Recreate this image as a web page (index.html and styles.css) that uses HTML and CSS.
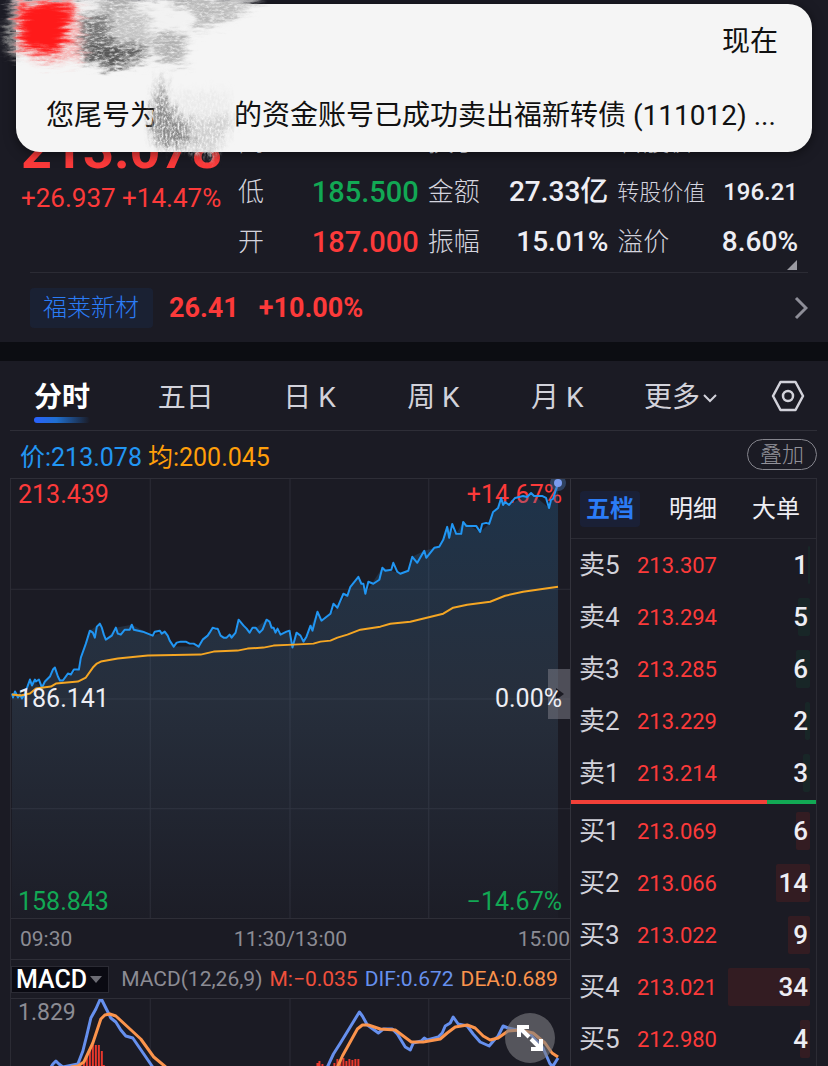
FILE: index.html
```html
<!DOCTYPE html>
<html lang="zh-CN">

<head>
    <meta charset="UTF-8">
    <meta name="viewport" content="width=device-width, initial-scale=1.0">
    <title>分时行情</title>
    <link rel="stylesheet" href="styles.css">
</head>

<body>
    <!-- Notification -->
    <div class="notice" role="status">
        <div class="notice-time">现在</div>
        <div class="notice-text">
            <span>您尾号为</span>
            <span class="notice-mask"></span>
            <span>的资金账号已成功卖出福新转债 (111012) ...</span>
        </div>
    </div>
    <svg class="smudge" viewBox="0 0 280 170" aria-hidden="true">
        <defs>
            <filter id="chalk" x="-20%" y="-20%" width="140%" height="140%" color-interpolation-filters="sRGB">
                <feGaussianBlur in="SourceGraphic" stdDeviation="4" result="soft" />
                <feTurbulence type="fractalNoise" baseFrequency="0.05 0.25" numOctaves="4" seed="4" result="streak" />
                <feDisplacementMap in="soft" in2="streak" scale="22" xChannelSelector="R" yChannelSelector="G" result="rough" />
                <feTurbulence type="fractalNoise" baseFrequency="0.2 0.5" numOctaves="3" seed="9" />
                <feColorMatrix values="0 0 0 0 0  0 0 0 0 0  0 0 0 0 0  2 0 0 0 -0.15" result="grain" />
                <feComposite in="rough" in2="grain" operator="in" />
            </filter>
            <filter id="chalk-solid" x="-20%" y="-20%" width="140%" height="140%" color-interpolation-filters="sRGB">
                <feGaussianBlur in="SourceGraphic" stdDeviation="4" result="soft" />
                <feTurbulence type="fractalNoise" baseFrequency="0.05 0.3" numOctaves="4" seed="6" result="streak" />
                <feDisplacementMap in="soft" in2="streak" scale="20" xChannelSelector="R" yChannelSelector="G" />
            </filter>
            <filter id="chalk-down" x="-20%" y="-20%" width="140%" height="140%" color-interpolation-filters="sRGB">
                <feGaussianBlur in="SourceGraphic" stdDeviation="4" result="soft" />
                <feTurbulence type="fractalNoise" baseFrequency="0.2 0.08" numOctaves="4" seed="7" result="streak" />
                <feDisplacementMap in="soft" in2="streak" scale="16" xChannelSelector="R" yChannelSelector="G" result="rough" />
                <feTurbulence type="fractalNoise" baseFrequency="0.5 0.3" numOctaves="3" seed="3" />
                <feColorMatrix values="0 0 0 0 0  0 0 0 0 0  0 0 0 0 0  2.5 0 0 0 -0.5" result="grain" />
                <feComposite in="rough" in2="grain" operator="in" />
            </filter>
        </defs>
        <g filter="url(#chalk-solid)">
            <path d="M12 -6H262L232 12 190 24 182 54 140 60 110 64 60 58 14 54Z" fill="#f2f2f2" />
        </g>
        <g filter="url(#chalk)">
            <path d="M80 12H150L144 50 120 56 80 54Z" fill="#c4c4c4" />
            <path d="M80 16H110V58H80Z" fill="#777777" />
            <path d="M88 46H144V58L112 68 84 58Z" fill="#555555" />
            <path d="M144 34H186V62H162Z" fill="#b0b0b0" />
            <path d="M98 0H132V10H100ZM170 -4H200V4H170Z" fill="#999999" />
            <path d="M190 0H262L236 14 196 30Z" fill="#b8b8b8" />
            <path d="M4 30L16 2 17 58 8 50Z" fill="#999999" />
            <path d="M26 48H80V62H40ZM66 10H82V60H66Z" fill="#f6b5b5" />
        </g>
        <g filter="url(#chalk-solid)">
            <path d="M18 2H72L66 42 56 54 20 50Z" fill="#ff1a1a" />
        </g>
        <path d="M164 80H212L228 100 230 122 212 150 160 140 152 116Z" fill="#f5f5f5" />
        <g filter="url(#chalk-down)">
            <path d="M162 74L154 100 150 124 158 146 196 148 190 122 168 108Z" fill="#8a8a8a" />
            <path d="M186 116H236L222 140 210 160 190 144Z" fill="#d0d0d0" />
            <path d="M172 92H228V116L178 120Z" fill="#ebebeb" />
        </g>
    </svg>

    <!-- Quote summary -->
    <section class="quote">
        <div class="quote-main">
            <div class="quote-price">
                <div class="price">213.078</div>
                <div class="change">+26.937 +14.47%</div>
            </div>
            <dl class="stats">
                <div><dt>高</dt><dd class="up">213.439</dd></div>
                <div><dt>低</dt><dd class="down">185.500</dd></div>
                <div><dt>开</dt><dd class="up">187.000</dd></div>
            </dl>
            <dl class="stats">
                <div><dt>换手</dt><dd>138.6%</dd></div>
                <div><dt>金额</dt><dd>27.33亿</dd></div>
                <div><dt>振幅</dt><dd>15.01%</dd></div>
            </dl>
            <dl class="stats">
                <div><dt>转股价</dt><dd>13.6</dd></div>
                <div class="small"><dt>转股价值</dt><dd>196.21</dd></div>
                <div><dt>溢价</dt><dd>8.60%</dd></div>
            </dl>
            <span class="corner"></span>
        </div>
        <a class="underlying" href="#">
            <span class="underlying-name">福莱新材</span>
            <span class="underlying-price">26.41</span>
            <span class="underlying-price">+10.00%</span>
            <svg class="arrow" viewBox="0 0 14 24" aria-hidden="true">
                <path d="M2 2L12 12 2 22" fill="none" stroke="#8e8e98" stroke-width="3" />
            </svg>
        </a>
    </section>

    <section class="panel">
        <nav class="tabs">
            <button class="tab active">分时</button>
            <button class="tab">五日</button>
            <button class="tab">日 K</button>
            <button class="tab">周 K</button>
            <button class="tab">月 K</button>
            <button class="tab">更多<svg class="more" viewBox="0 0 16 10" aria-hidden="true">
                    <path d="M2 2L8 8 14 2" fill="none" stroke="#d2d2da" stroke-width="2" />
                </svg></button>
            <button class="settings" aria-label="设置">
                <svg viewBox="0 0 34 32" aria-hidden="true">
                    <path d="M9.500 2H24.500L32 16 24.500 30H9.500L2 16Z" fill="none" stroke="#d2d2da" stroke-width="2.500" stroke-linejoin="round" />
                    <circle cx="17" cy="16" r="5" fill="none" stroke="#d2d2da" stroke-width="2.500" />
                </svg>
            </button>
        </nav>

        <div class="legend">
            <span class="blue">价:213.078</span>
            <span class="orange">均:200.045</span>
            <button class="overlay-btn">叠加</button>
        </div>

        <div class="content">
            <div class="charts">
                <div class="chart">
                    <span class="label top left up">213.439</span>
                    <span class="label top right up">+14.67%</span>
                    <svg class="plot" viewBox="0 0 560 440" preserveAspectRatio="none" aria-hidden="true">
                        <defs>
                            <linearGradient id="area" x1="0" y1="0" x2="0" y2="1">
                                <stop offset="0" stop-color="#2478b8" stop-opacity="0.26" />
                                <stop offset="0.5" stop-color="#5a86a8" stop-opacity="0.18" />
                                <stop offset="1" stop-color="#5a86a8" stop-opacity="0.02" />
                            </linearGradient>
                        </defs>
                        <path class="grid" d="M139.500 0V440M279.500 0V440M418.500 0V440M0 110.500H560M0 220.500H560M0 330.500H560" />
                        <path fill="url(#area)" d="M1 215L14 215 19 201 31 209 44 189 49 202 68 191 79 152 89 145 95 161 105 149 121 146 142 157 154 153 163 168 188 168 202 149 213 159 225 154 228 141 239 154 256 141 270 156 279 152 282 169 286 154 293 163 307 133 311 142 327 129 348 98 355 115 372 89 390 95 398 92 402 78 414 72 429 68 433 61 437 48 446 55 453 43 470 53 479 45 491 19 499 26 521 14 539 29 548 4V440H1Z" />
                        <polyline class="line price-line" points="1,215 2,219 4,213 7,219 9,216 11,220 14,215 19,201 21,207 24,201 25,203 28,201 31,209 34,203 36,201 39,198 42,191 44,189 47,198 49,202 52,202 57,195 60,196 63,191 68,191 70,179 75,165 79,152 82,154 84,159 86,148 89,145 91,149 93,156 95,161 101,157 105,149 107,155 110,156 114,151 119,151 121,146 123,151 132,153 137,155 142,157 144,153 149,152 151,155 154,153 157,157 159,162 163,168 166,164 170,163 175,163 179,165 183,165 188,168 192,161 197,157 199,154 202,149 205,150 207,150 210,157 213,159 216,159 219,156 221,159 225,154 228,141 233,147 236,150 239,154 242,149 245,149 249,154 252,151 256,141 259,143 261,149 263,149 265,154 267,150 270,156 276,153 279,152 282,169 286,154 290,157 293,163 296,158 300,147 302,152 307,133 311,142 320,135 323,125 327,129 333,115 337,117 340,108 348,98 351,105 353,105 355,115 358,103 363,105 369,101 372,89 375,92 381,91 383,84 387,93 390,95 398,92 402,78 407,84 414,72 416,79 424,69 429,68 433,61 437,48 439,59 442,45 446,55 451,55 453,43 456,47 466,47 470,53 472,45 476,44 479,45 483,33 488,29 491,19 493,26 495,23 499,26 505,19 513,17 517,18 521,14 524,17 532,17 536,19 539,29 541,21 543,20 548,4" />
                        <polyline class="line avg-line" points="1,216 10,217 19,215 25,210 40,208 45,205 67,203 75,199 82,189 86,185 90,183 107,180 137,177 190,176 203,173 227,172 237,170 253,169 263,167 283,166 303,165 310,163 320,162 327,159 337,156 350,151 370,148 380,145 400,143 433,135 443,129 457,126 480,123 495,117 513,113 548,108" />
                        <circle cx="548" cy="4" r="8" fill="#4a7ab8" opacity="0.4" />
                        <circle cx="548" cy="4" r="4" fill="#7b9cf0" />
                    </svg>
                    <span class="handle"></span>
                    <span class="label middle left">186.141</span>
                    <span class="label middle right">0.00%</span>
                    <span class="label bottom left down">158.843</span>
                    <span class="label bottom right down">−14.67%</span>
                </div>
                <div class="axis">
                    <span>09:30</span>
                    <span>11:30/13:00</span>
                    <span>15:00</span>
                </div>
                <div class="macd-head">
                    <button class="macd-btn">MACD<span class="caret"></span></button>
                    <span>MACD(12,26,9)</span>
                    <span class="macd-m">M:−0.035</span>
                    <span class="macd-dif">DIF:0.672</span>
                    <span class="macd-dea">DEA:0.689</span>
                </div>
                <div class="macd">
                    <span class="label top left">1.829</span>
                    <svg class="plot" viewBox="0 0 560 68" preserveAspectRatio="none" aria-hidden="true">
                        <path class="grid" d="M139.500 0V68M279.500 0V68M418.500 0V68" />
                        <path class="bars" d="M73 68V63M76 68V58M79 68V51M82 68V46M85 68V46M88 68V46M91 68V52M93 68V66M307 68V64M309 68V62M312 68V65M324 68V64M327 68V60M330 68V62M333 68V59M336 68V62M339 68V60M342 68V61M345 68V60M348 68V60" />
                        <polyline class="line dif-line" points="40,68 42,65 45,62 48,65 52,68 57,67 67,65 72,52 76,36 80,19 85,10 89,1 91,1 95,9 100,19 105,23 110,31 115,37 122,39 133,55 142,68" />
                        <polyline class="line dif-line" points="317,68 323,55 330,44 349,13 352,17 357,26 368,34 373,30 382,30 387,35 395,48 400,51 403,44 411,42 414,39 417,41 428,38 432,34 435,27 440,24 443,18 448,25 457,27 463,35 470,43 479,47 485,40 488,37 493,27 498,29 507,31 520,35 533,49 540,65 543,67 548,59" />
                        <polyline class="line dea-line" points="60,68 67,67 73,63 82,44 90,20 94,16 99,15 105,17 117,28 130,40 143,58 155,68" />
                        <polyline class="line dea-line" points="327,68 332,57 347,30 352,26 358,26 370,30 385,31 393,37 401,43 413,43 430,40 437,34 445,28 457,26 465,29 473,37 480,41 488,39 498,32 510,31 523,34 535,44 542,54 548,58" />
                    </svg>
                    <button class="expand" aria-label="展开">
                        <svg viewBox="0 0 28 28" aria-hidden="true">
                            <path d="M3 13V3H13M4 4L13 13M25 15V25H15M24 24L15 15" fill="none" stroke="#ffffff" stroke-width="4" />
                        </svg>
                    </button>
                </div>
            </div>

            <div class="book">
                <div class="book-tabs">
                    <button class="book-tab active">五档</button>
                    <button class="book-tab">明细</button>
                    <button class="book-tab">大单</button>
                </div>
                <table>
                    <tbody class="sell">
                        <tr><th scope="row">卖5</th><td>213.307</td><td><i style="width: 2px"></i><b>1</b></td></tr>
                        <tr><th scope="row">卖4</th><td>213.294</td><td><i style="width: 12px"></i><b>5</b></td></tr>
                        <tr><th scope="row">卖3</th><td>213.285</td><td><i style="width: 14px"></i><b>6</b></td></tr>
                        <tr><th scope="row">卖2</th><td>213.229</td><td><i style="width: 5px"></i><b>2</b></td></tr>
                        <tr><th scope="row">卖1</th><td>213.214</td><td><i style="width: 7px"></i><b>3</b></td></tr>
                    </tbody>
                </table>
                <div class="ratio"><span style="width: 80%"></span></div>
                <table>
                    <tbody class="buy">
                        <tr><th scope="row">买1</th><td>213.069</td><td><i style="width: 14px"></i><b>6</b></td></tr>
                        <tr><th scope="row">买2</th><td>213.066</td><td><i style="width: 34px"></i><b>14</b></td></tr>
                        <tr><th scope="row">买3</th><td>213.022</td><td><i style="width: 22px"></i><b>9</b></td></tr>
                        <tr><th scope="row">买4</th><td>213.021</td><td><i style="width: 82px"></i><b>34</b></td></tr>
                        <tr><th scope="row">买5</th><td>212.980</td><td><i style="width: 10px"></i><b>4</b></td></tr>
                    </tbody>
                </table>
            </div>
        </div>
    </section>
</body>

</html>
```
FILE: styles.css
```css
* {
    box-sizing: border-box;
}

body {
    margin: 0;
    background-color: #0c0d12;
    color: #eeeef4;
    font-family: Roboto, "Noto Sans CJK SC", sans-serif;
    font-size: 24px;
    position: relative;
    overflow-x: hidden;
}

button {
    margin: 0;
    padding: 0;
    border: none;
    background: none;
    color: inherit;
    font: inherit;
    cursor: pointer;
}

.up {
    color: #fc3a3a;
}

.down {
    color: #12a854;
}

/* Notification */
.notice {
    position: absolute;
    top: 4px;
    left: 16px;
    right: 16px;
    height: 148px;
    padding: 17px 34px 0 30px;
    border-radius: 24px;
    background-color: #f5f5f5;
    color: #111;
    font-size: 28px;
    line-height: 42px;
    box-shadow: 0 2px 12px rgba(0, 0, 0, 0.5);
    z-index: 10;
}

.notice-time {
    text-align: right;
}

.notice-text {
    display: flex;
    margin-top: 32px;
    white-space: nowrap;
}

.notice-mask {
    width: 76px;
}

.smudge {
    position: absolute;
    top: 0;
    left: 0;
    width: 280px;
    height: 170px;
    z-index: 11;
    pointer-events: none;
}

/* Quote summary */
.quote {
    background-color: #1b1b24;
    padding-top: 117px;
}

.quote-main {
    position: relative;
    display: grid;
    grid-template-columns: 208px 1fr 1fr 1fr;
    column-gap: 9px;
    padding: 0 30px 5px 21px;
}

.price {
    color: #fc3a3a;
    font-size: 54px;
    font-weight: 700;
    line-height: 66px;
}

.change {
    color: #fc3a3a;
    font-size: 26px;
    line-height: 30px;
    white-space: nowrap;
}

.stats {
    margin: 0;
}

.stats div {
    display: flex;
    justify-content: space-between;
    align-items: center;
    height: 50px;
    white-space: nowrap;
}

.stats dt {
    padding-bottom: 5px;
    color: #d4d4de;
    font-size: 26px;
    font-weight: 300;
}

.stats dd {
    margin: 0;
    font-size: 28px;
    font-weight: 500;
    line-height: 32px;
}

.stats .up,
.stats .down {
    font-size: 29px;
}

.stats .small dt {
    font-size: 22px;
}

.stats .small dd {
    font-size: 24px;
}

.corner {
    position: absolute;
    right: 31px;
    bottom: 2px;
    border-left: 10px solid transparent;
    border-bottom: 10px solid #9a9aa2;
}

.underlying {
    display: flex;
    align-items: center;
    gap: 20px;
    height: 70px;
    margin: 0 20px 0 30px;
    border-top: 1px solid #2b2b34;
    color: #fc3a3a;
    text-decoration: none;
}

.underlying-name {
    padding: 0 14px 0 13px;
    margin-right: -4px;
    border-radius: 4px;
    background-color: #1a2133;
    color: #2b7cf6;
    font-weight: 300;
    line-height: 40px;
}

.underlying-price {
    font-size: 27px;
    font-weight: 700;
}

.arrow {
    width: 14px;
    height: 24px;
    margin-left: auto;
}

/* Chart panel */
.panel {
    margin-top: 19px;
    padding: 0 11px 0 10px;
    background-color: #1b1b24;
}

.tabs {
    display: grid;
    grid-template-columns: repeat(6, 1fr) 62px;
    align-items: center;
    justify-items: center;
    height: 69px;
    margin-left: -10px;
    padding-right: 12px;
}

.tab {
    position: relative;
    height: 54px;
    color: #d2d2da;
    font-size: 28px;
    line-height: 58px;
    white-space: nowrap;
}

.tab.active {
    color: #fff;
    font-weight: 700;
}

.tab.active::after {
    content: "";
    position: absolute;
    left: 0;
    right: 0;
    bottom: 0;
    height: 6px;
    border-radius: 3px;
    background: linear-gradient(to right, #2a62ff, #1f6fd0 40%, transparent);
}

.more {
    width: 16px;
    height: 10px;
    margin-left: 2px;
    vertical-align: 4px;
}

.settings {
    justify-self: end;
    height: 32px;
}

.settings svg {
    display: block;
    width: 34px;
    height: 32px;
}

.legend {
    display: flex;
    align-items: center;
    gap: 6px;
    height: 48px;
    padding-left: 10px;
    border-top: 1px solid #2e2e37;
    font-size: 25px;
}

.blue {
    color: #2296f3;
}

.orange {
    color: #ff9f0a;
}

.overlay-btn {
    width: 70px;
    height: 31px;
    margin-left: auto;
    border: 1px solid #85858d;
    border-radius: 16px;
    color: #92929a;
    font-size: 22px;
    font-weight: 300;
    line-height: 28px;
}

.content {
    display: grid;
    grid-template-columns: 560fr 247fr;
    border-top: 1px solid #2e2e37;
}

.charts {
    min-width: 0;
    border-left: 1px solid #2b2b34;
}

.chart {
    position: relative;
    height: 440px;
    border-bottom: 1px solid #2e2e37;
}

.plot {
    position: relative;
    display: block;
    width: 100%;
    height: 100%;
}

.grid {
    fill: none;
    stroke: #2c2c36;
    stroke-width: 1;
}

.line {
    fill: none;
    stroke-width: 2;
    stroke-linejoin: round;
}

.price-line {
    stroke: #2196f3;
}

.avg-line {
    stroke: #f5a623;
}

.label {
    position: absolute;
    font-size: 25px;
    line-height: 32px;
}

.label.top {
    top: 0;
}

.label.middle {
    top: 204px;
}

.label.bottom {
    bottom: 0;
}

.label.left {
    left: 7px;
}

.label.right {
    right: 8px;
}

.handle {
    position: absolute;
    top: 190px;
    right: 0;
    width: 22px;
    height: 50px;
    background-color: rgba(130, 130, 140, 0.5);
}

.handle::after {
    content: "";
    position: absolute;
    top: 19px;
    right: 6px;
    border: 6px solid transparent;
    border-left: 8px solid #1b1b24;
    border-right: none;
}

.axis {
    display: grid;
    grid-template-columns: 1fr auto 1fr;
    color: #8c8c94;
    font-size: 21px;
    line-height: 40px;
}

.axis span:first-child {
    padding-left: 9px;
}

.axis span:last-child {
    text-align: right;
}

.macd-head {
    display: flex;
    align-items: center;
    gap: 7px;
    height: 40px;
    border-top: 1px solid #2e2e37;
    border-bottom: 1px solid #2e2e37;
    color: #8c8c94;
    font-size: 21px;
    white-space: nowrap;
}

.macd-btn {
    display: flex;
    align-items: center;
    gap: 3px;
    height: 27px;
    margin-right: 5px;
    padding: 0 6px 0 4px;
    border: 1px solid #2b2b34;
    background-color: #0a0a12;
    color: #fff;
    font-size: 25px;
    font-weight: 500;
}

.caret {
    border: 6px solid transparent;
    border-top: 7px solid #6c6c74;
    border-bottom: none;
}

.macd-m {
    color: #f0503c;
}

.macd-dif {
    color: #6690ee;
}

.macd-dea {
    color: #fb944c;
}

.macd {
    position: relative;
    height: 68px;
}

.macd .label {
    color: #8c8c94;
    font-size: 23px;
    line-height: 28px;
}

.macd .line {
    stroke-width: 3;
}

.dif-line {
    stroke: #6690ee;
}

.dea-line {
    stroke: #fb944c;
}

.bars {
    stroke: #e8382c;
    stroke-width: 2;
}

.expand {
    position: absolute;
    top: 14px;
    right: 15px;
    width: 50px;
    height: 50px;
    padding: 11px;
    border-radius: 50%;
    background-color: rgba(125, 125, 130, 0.6);
}

.expand svg {
    display: block;
}

/* Order book */
.book {
    border-left: 1px solid #33333c;
    border-right: 1px solid #2b2b34;
}

.book-tabs {
    display: flex;
    justify-content: space-between;
    align-items: center;
    height: 60px;
    padding: 0 10px 0 9px;
    border-bottom: 1px solid #2b2b34;
}

.book-tab {
    padding: 0 6px;
    line-height: 36px;
}

.book-tab.active {
    border-radius: 4px;
    background-color: #1a2036;
    color: #2b7cf6;
    font-weight: 700;
}

table {
    width: 100%;
    table-layout: fixed;
    border-collapse: collapse;
}

tr {
    height: 52px;
}

th,
td {
    padding: 0;
    white-space: nowrap;
}

th {
    width: 66px;
    padding-left: 8px;
    color: #d2d2da;
    font-size: 26px;
    font-weight: 400;
    line-height: 32px;
    text-align: left;
}

td {
    color: #fc3a3a;
    font-size: 22px;
}

td:last-child {
    position: relative;
    padding-right: 8px;
    color: #eeeef4;
    font-size: 26px;
    text-align: right;
}

td b {
    position: relative;
    font-weight: 500;
}

td i {
    position: absolute;
    top: 7px;
    right: 6px;
    height: 38px;
    border-radius: 2px;
}

.sell i {
    background-color: #182627;
}

.buy i {
    background-color: #331c22;
}

.ratio {
    height: 4px;
    margin: 1px 0;
    background-color: #12a854;
}

.ratio span {
    display: block;
    height: 100%;
    background-color: #f24038;
}
```
